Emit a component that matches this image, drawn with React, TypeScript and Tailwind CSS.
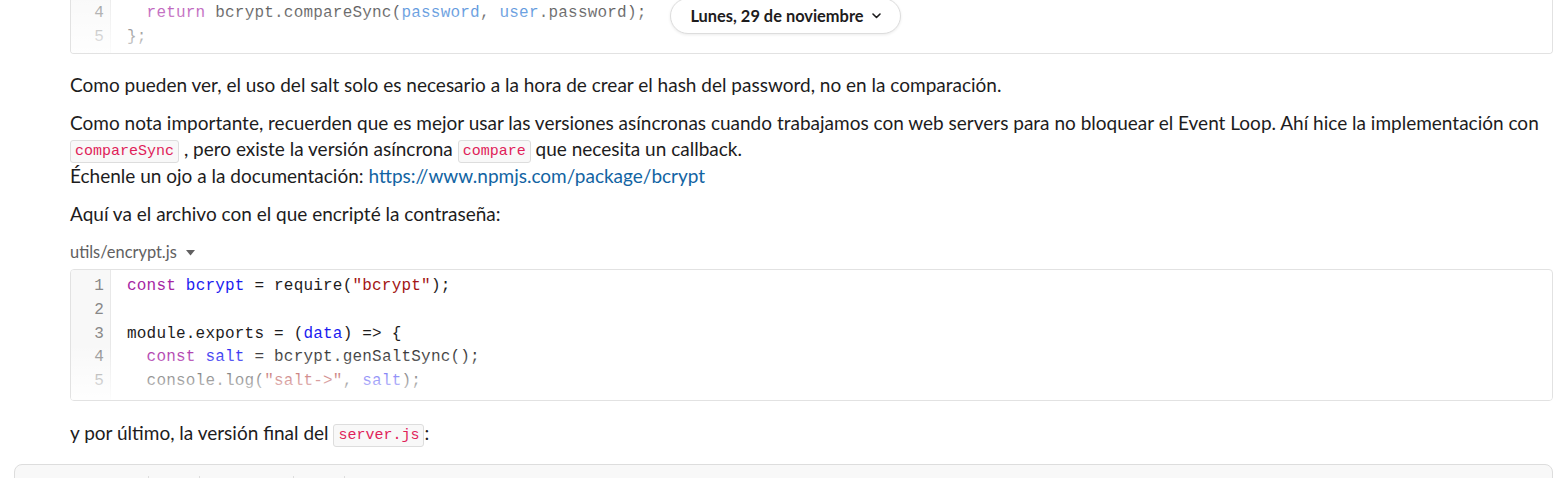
import React from "react";

const Code = ({ children }: { children: React.ReactNode }) => (
  <code className="inline-block h-[23px] px-[4px] leading-[21px] align-[1px] rounded-[3px] border border-[#dddddd] bg-[#f8f8f8] text-[#e01e5a] text-[15px] font-['Liberation_Mono',monospace]">
    {children}
  </code>
);

const K = ({ c, children }: { c: string; children: React.ReactNode }) => (
  <span style={{ color: c }}>{children}</span>
);

export default function App() {
  const mono = "font-['Liberation_Mono',monospace] text-[16px] tracking-[0.2px]";
  return (
    <div className="relative w-[1554px] h-[478px] overflow-hidden bg-white font-['Lato',sans-serif] text-[#1d1c1d]">
      <div className="pl-[70px] pr-[1px]">
        {/* top code block (tail) */}
        <div className="relative flex border border-t-0 border-[#e2e2e2] rounded-b-[4px] overflow-hidden">
          <div className={`w-[40px] shrink-0 bg-[#f8f8f8] border-r border-[#e8e8e8] text-right pr-[6px] pt-[1px] pb-[4px] text-[#888888] leading-[24px] ${mono}`}>
            <div>4</div>
            <div>5</div>
          </div>
          <div className={`pl-[16px] pt-[1px] pb-[4px] leading-[24px] whitespace-pre text-[#1d1c1d] ${mono}`}>
            <div>
              {"  "}
              <K c="#a626a4">return</K> bcrypt.compareSync(<K c="#1a6fd0">password</K>, <K c="#1a6fd0">user</K>.password);
            </div>
            <div>{"};"}</div>
          </div>
          <div className="pointer-events-none absolute inset-0 bg-gradient-to-b from-white/20 to-white/85" />
        </div>

        <p className="mt-[19px] text-[19px] leading-[24px]">
          Como pueden ver, el uso del salt solo es necesario a la hora de crear el hash del password, no en la comparación.
        </p>

        <p className="mt-[13px] text-[19px] leading-[26px]">
          Como nota importante, recuerden que es mejor usar las versiones asíncronas cuando trabajamos con web servers para no bloquear el Event Loop. Ahí hice la implementación con
          <br />
          <Code>compareSync</Code> , pero existe la versión asíncrona <Code>compare</Code> que necesita un callback.
          <br />
          Échenle un ojo a la documentación:{" "}
          <a className="text-[#1264a3]" href="#">
            https://www.npmjs.com/package/bcrypt
          </a>
        </p>

        <p className="mt-[13px] text-[19px] leading-[24px]">Aquí va el archivo con el que encripté la contraseña:</p>

        <div className="mt-[16px] flex items-center gap-[9px] text-[16.4px] leading-[20px] text-[#616061]">
          <span>utils/encrypt.js</span>
          <svg width="9" height="6" viewBox="0 0 9 6" className="mt-[1px]">
            <path d="M0 0 H9 L4.5 5.5 Z" fill="#616061" />
          </svg>
        </div>

        {/* second code block */}
        <div className="relative mt-[7px] flex border border-[#e2e2e2] rounded-[4px] overflow-hidden">
          <div className={`w-[40px] shrink-0 bg-[#f8f8f8] border-r border-[#e8e8e8] text-right pr-[6px] pt-[5px] pb-[6px] text-[#888888] leading-[23.8px] ${mono}`}>
            <div>1</div>
            <div>2</div>
            <div>3</div>
            <div>4</div>
            <div>5</div>
          </div>
          <div className={`pl-[16px] pt-[5px] pb-[6px] leading-[23.8px] whitespace-pre text-[#1d1c1d] ${mono}`}>
            <div>
              <K c="#a626a4">const</K> <K c="#1c1cf0">bcrypt</K> = require(<K c="#a31515">"bcrypt"</K>);
            </div>
            <div> </div>
            <div>
              module.exports = (<K c="#1c1cf0">data</K>) =&gt; {"{"}
            </div>
            <div>
              {"  "}
              <K c="#a626a4">const</K> <K c="#1c1cf0">salt</K> = bcrypt.genSaltSync();
            </div>
            <div>
              {"  "}console.log(<K c="#a31515">"salt-&gt;"</K>, <K c="#1c1cf0">salt</K>);
            </div>
          </div>
          <div className="pointer-events-none absolute left-0 right-0 bottom-0 h-[56px] bg-gradient-to-b from-white/0 to-white/90" />
        </div>

        <p className="mt-[16px] text-[19px] leading-[31px]">
          y por último, la versión final del <Code>server.js</Code>:
        </p>
      </div>

      {/* composer */}
      <div className="mt-[16px] ml-[14px] mr-[1px] h-[40px] rounded-t-[8px] border border-[#dddddd] bg-[#f8f8f8] flex items-start pt-[11px]">
        <div className="w-[133px]" />
        <div className="w-px h-[20px] bg-[#dddddd]" />
        <div className="w-[50px]" />
        <div className="w-px h-[20px] bg-[#dddddd]" />
        <div className="w-[93px]" />
        <div className="w-px h-[20px] bg-[#dddddd]" />
        <div className="w-[50px]" />
        <div className="w-px h-[20px] bg-[#dddddd]" />
      </div>

      {/* date divider pill */}
      <div className="absolute left-[670px] top-[-2px] h-[36px] w-[231px] rounded-full border border-[#dddddd] bg-white shadow-[0_1px_3px_rgba(0,0,0,0.08)] flex items-center justify-center gap-[8px] text-[16.4px] font-bold text-[#1d1c1d]">
        <span>Lunes, 29 de noviembre</span>
        <svg width="9" height="6" viewBox="0 0 9 6">
          <path d="M1 1 L4.5 4.5 L8 1" fill="none" stroke="#1d1c1d" strokeWidth="1.6" strokeLinecap="round" strokeLinejoin="round" />
        </svg>
      </div>
    </div>
  );
}
